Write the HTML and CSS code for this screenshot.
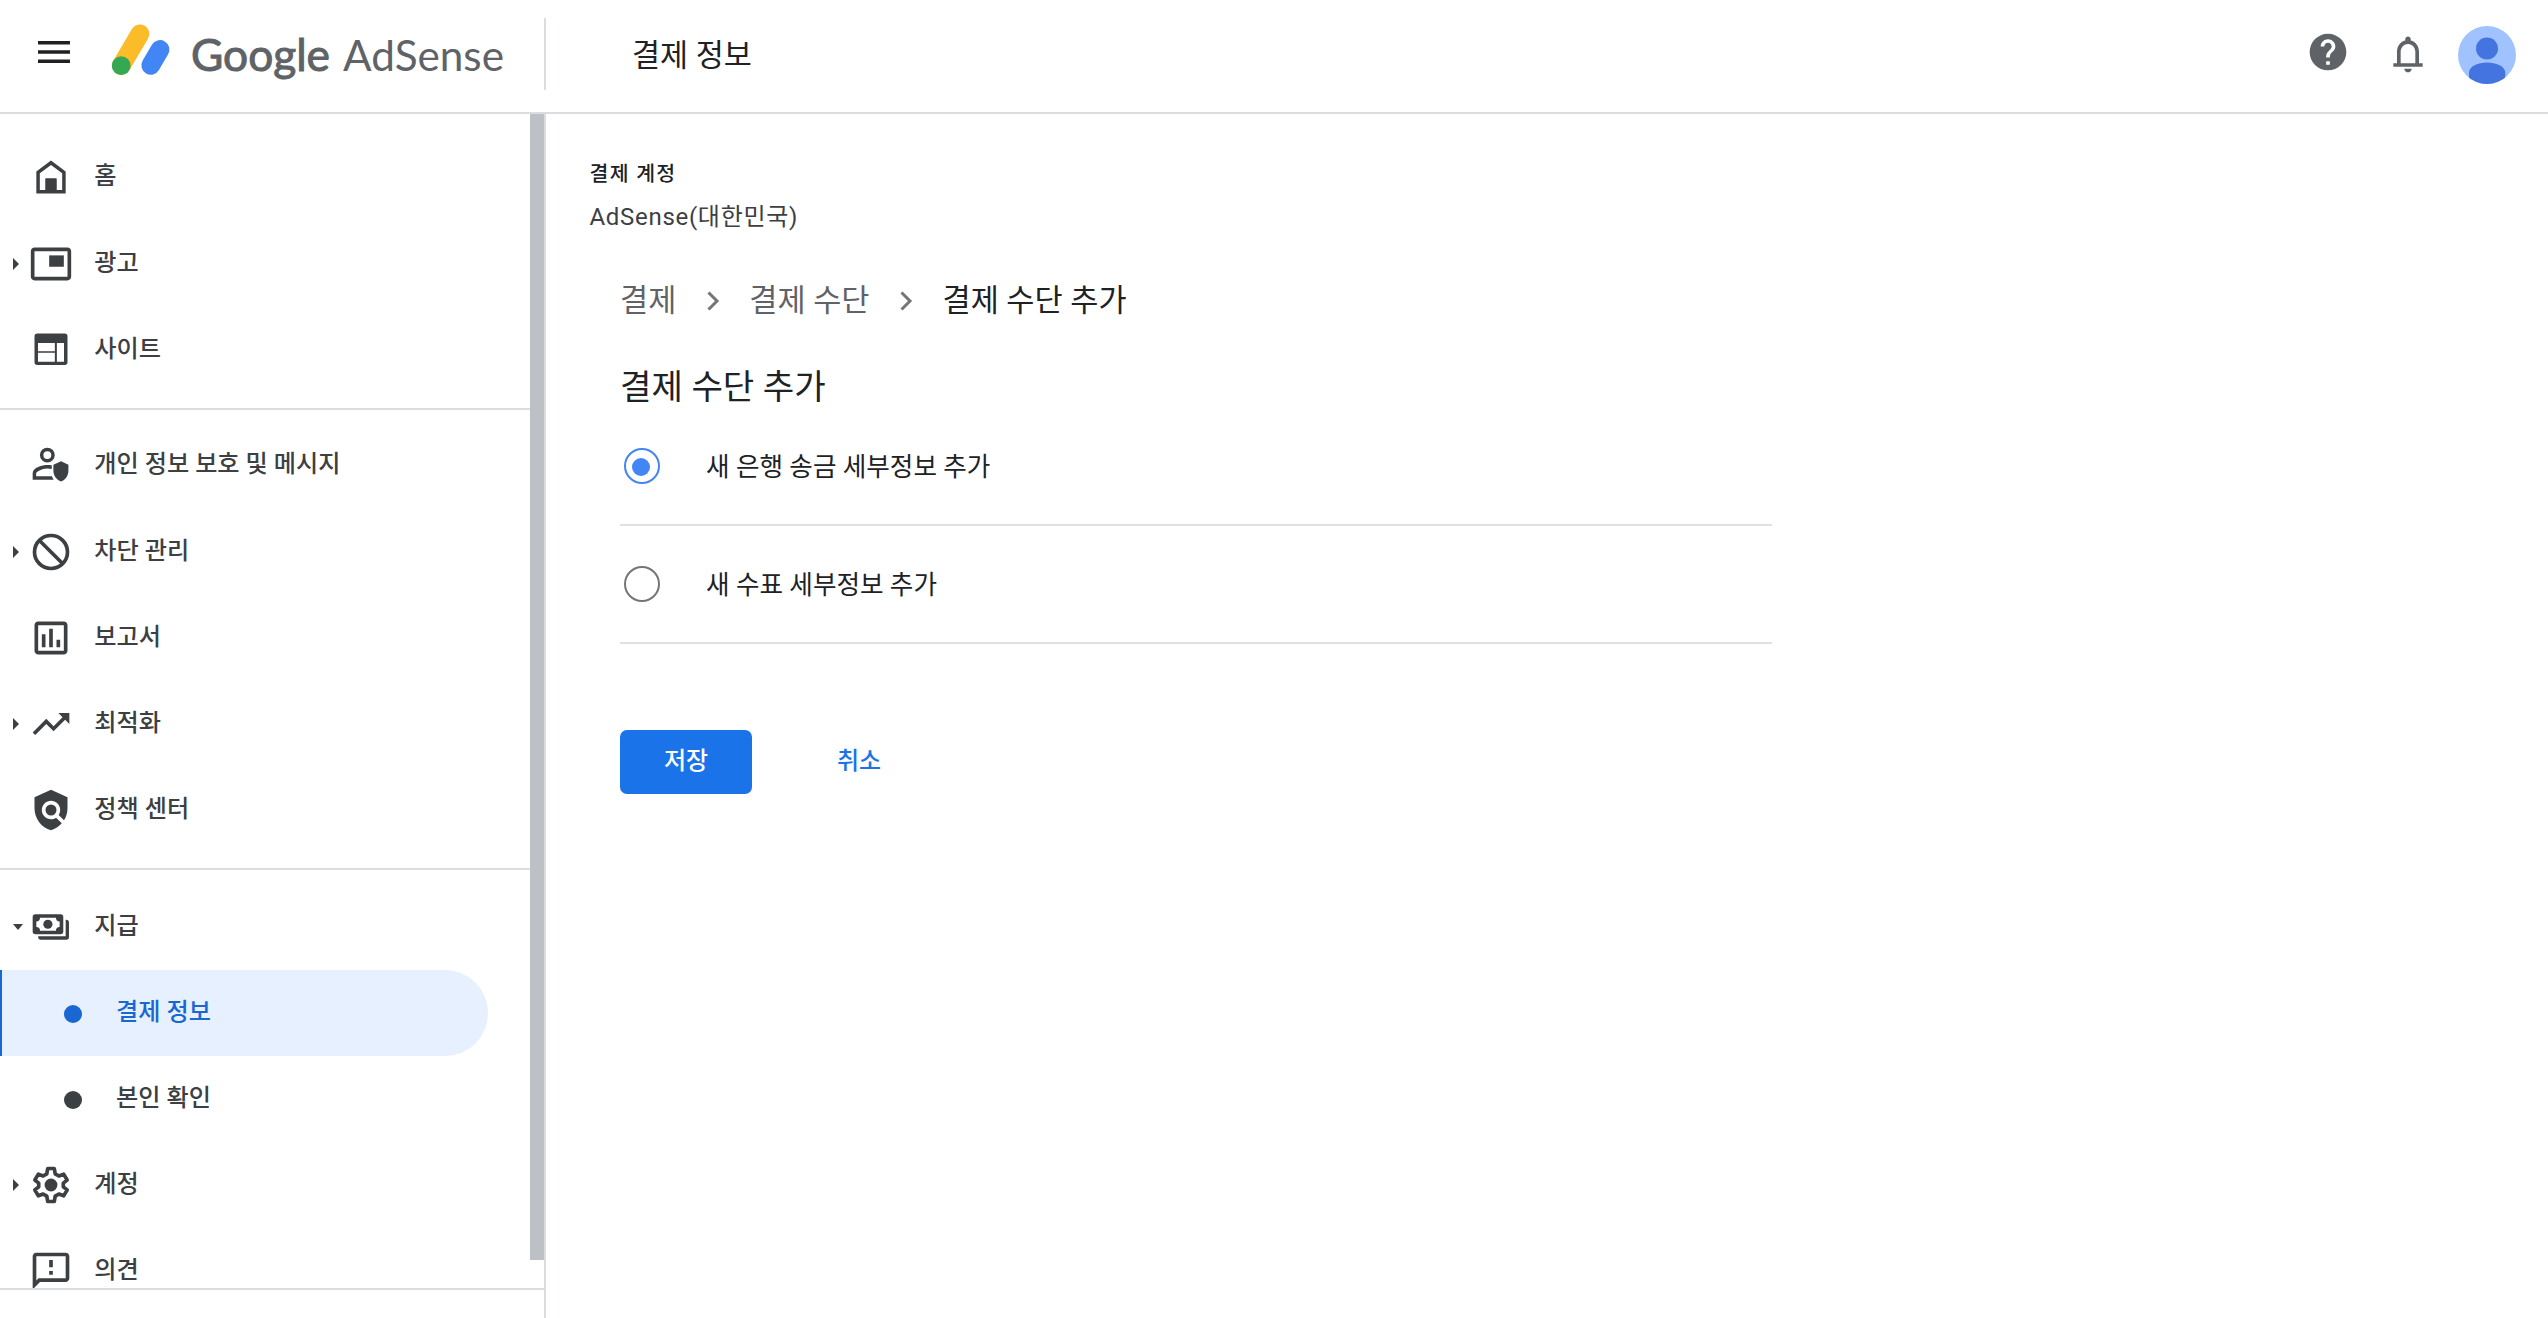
FILE: index.html
```html
<!DOCTYPE html>
<html lang="ko">
<head>
    <meta charset="UTF-8">
    <title>결제 정보 - Google AdSense</title>
    <link rel="stylesheet" href="styles.css">
</head>
<body>
    <header class="header">
        <div class="brand">
            <svg class="menu-btn" viewBox="0 0 32 22"><path d="M0 0h32v3.6H0zM0 9.2h32v3.6H0zM0 18.4h32V22H0z"/></svg>
            <svg class="logo" viewBox="0 0 58 51">
                <path d="M28 8.800L9.200 40.700" stroke="#fbbc2a" stroke-width="18.800" stroke-linecap="round"/>
                <path d="M48 24.500L38.800 40.300" stroke="#4285f4" stroke-width="18.800" stroke-linecap="round"/>
                <circle cx="9.200" cy="40.700" r="9.400" fill="#34a853"/>
            </svg>
            <svg class="wordmark" viewBox="0 0 320 60">
                <text class="google" x="0" y="46" textLength="139" lengthAdjust="spacingAndGlyphs">Google</text>
                <text class="adsense" x="152" y="46" textLength="161" lengthAdjust="spacingAndGlyphs">AdSense</text>
            </svg>
        </div>
        <h1>결제 정보</h1>
        <div class="tools">
            <svg class="help" viewBox="0 0 24 24"><path d="M12 2C6.48 2 2 6.48 2 12s4.48 10 10 10 10-4.48 10-10S17.52 2 12 2zm1 17h-2v-2h2v2zm2.07-7.75l-.9.92C13.45 12.9 13 13.5 13 15h-2v-.5c0-1.1.45-2.1 1.17-2.83l1.24-1.26c.37-.36.59-.86.59-1.41 0-1.1-.9-2-2-2s-2 .9-2 2H8c0-2.21 1.79-4 4-4s4 1.79 4 4c0 .88-.36 1.68-.93 2.25z"/></svg>
            <svg class="bell" viewBox="0 0 24 24"><path d="M12 22c1.1 0 2-.9 2-2h-4c0 1.1.9 2 2 2zm6-5v-6c0-3.07-1.63-5.64-4.5-6.32V4c0-.83-.67-1.5-1.5-1.5s-1.5.67-1.5 1.5v.68C7.64 5.36 6 7.92 6 11v6H4v2h16v-2h-2zm-2 0H8v-6c0-2.48 1.51-4.5 4-4.5s4 2.02 4 4.5v6z"/></svg>
            <svg class="avatar" viewBox="0 0 58 58">
                <clipPath id="round"><circle cx="29" cy="29" r="29"/></clipPath>
                <g clip-path="url(#round)">
                    <path fill="#a0c3ff" d="M0 0h58v58H0z"/>
                    <circle cx="29" cy="22.5" r="11" fill="#4374e0"/>
                    <path fill="#4374e0" d="M11 58V47c0-7 9-10.500 18-10.500S47.300 40 47.300 47v11z"/>
                </g>
            </svg>
        </div>
    </header>
    <div class="page">
        <aside class="sidebar">
            <nav class="nav">
                <ul>
                    <li class="tall">
                        <i></i>
                        <svg viewBox="0 0 24 24"><path d="M4 21V9l8-6 8 6v12H4zm1.900-1.900h3.100v-6.300h6v6.300h3.100V10L12 5.400 5.900 10z"/><path d="M9 12.800h6V20H9z"/></svg>
                        <span>홈</span>
                    </li>
                    <li>
                        <i class="closed"></i>
                        <svg viewBox="0 0 24 24"><path d="M19 7.300h-8v6.200H19V7.300z"/><path d="M21 3H3c-1.100 0-2 .900-2 2v14c0 1.100.900 1.980 2 1.980h18c1.100 0 2-.880 2-1.980V5c0-1.100-.900-2-2-2zm0 16.010H3V4.980h18v14.030z"/></svg>
                        <span>광고</span>
                    </li>
                    <li>
                        <i></i>
                        <svg viewBox="0 0 24 24"><path fill-rule="evenodd" d="M4.500 3h15A1.500 1.500 0 0 1 21 4.500v14.200a1.500 1.500 0 0 1-1.500 1.500h-15A1.500 1.500 0 0 1 3 18.700V4.500A1.500 1.500 0 0 1 4.500 3zM4.900 8.200v4.500h9.200V8.200zm0 5.300v4.900h9.200v-4.900zM15.200 8.200v10.200h3.900V8.200z"/></svg>
                        <span>사이트</span>
                    </li>
                </ul>
                <ul>
                    <li class="tall">
                        <i></i>
                        <svg viewBox="0 0 24 24"><circle cx="10" cy="6.600" r="3.100" fill="none" stroke="#3c4043" stroke-width="1.900"/><path d="M12.400 12.200c-.8-.15-1.600-.2-2.400-.2-2.700 0-8 1.300-8 4.500V20h11.500c-.5-.6-.8-1.200-1-1.900H3.900v-1.600c0-.7 3-2.600 6.100-2.600.8 0 1.600.1 2.400.3zM17.500 10l4 1.900v3.300c0 2.700-1.700 5.100-4 5.800-2.300-.7-4.200-3.100-4.200-5.800v-3.300z"/></svg>
                        <span>개인 정보 보호 및 메시지</span>
                    </li>
                    <li>
                        <i class="closed"></i>
                        <svg viewBox="0 0 24 24"><g fill="none" stroke="#3c4043" stroke-width="2"><circle cx="12" cy="12" r="9"/><path d="M5.700 5.700l12.600 12.600"/></g></svg>
                        <span>차단 관리</span>
                    </li>
                    <li>
                        <i></i>
                        <svg viewBox="0 0 24 24"><path d="M9 17H7v-7h2v7zm4 0h-2V7h2v10zm4 0h-2v-4h2v4zm2 2H5V5h14v14zm0-16H5c-1.100 0-2 .900-2 2v14c0 1.100.900 2 2 2h14c1.100 0 2-.900 2-2V5c0-1.100-.900-2-2-2z"/></svg>
                        <span>보고서</span>
                    </li>
                    <li>
                        <i class="closed"></i>
                        <svg viewBox="0 0 24 24"><path d="M16 6l2.290 2.290-4.880 4.880-4-4L2 16.590 3.410 18l6-6 4 4 6.300-6.290L22 12V6z"/></svg>
                        <span>최적화</span>
                    </li>
                    <li>
                        <i></i>
                        <svg viewBox="0 0 24 24"><path d="M21 5l-9-4-9 4v6c0 5.550 3.840 10.740 9 12 2.300-.560 4.330-1.900 5.880-3.710l-3.120-3.120c-1.940 1.290-4.580 1.070-6.290-.640-1.950-1.950-1.950-5.120 0-7.070 1.950-1.950 5.120-1.950 7.070 0 1.710 1.710 1.920 4.350.640 6.290l2.900 2.900C20.290 15.690 21 13.380 21 11V5z"/><circle cx="12" cy="12" r="3"/></svg>
                        <span>정책 센터</span>
                    </li>
                </ul>
                <ul>
                    <li>
                        <i class="open"></i>
                        <svg viewBox="0 0 24 24"><path fill-rule="evenodd" d="M3.500 5h13.700a1.500 1.500 0 0 1 1.500 1.500v8a1.500 1.500 0 0 1-1.500 1.500H3.500A1.500 1.500 0 0 1 2 14.500v-8A1.500 1.500 0 0 1 3.500 5zM6 7a2 2 0 0 1-2 2v3a2 2 0 0 1 2 2h8.700a2 2 0 0 1 2-2V9a2 2 0 0 1-2-2z"/><circle cx="10.300" cy="10.500" r="2.500"/><path d="M20 8h.300A1.500 1.500 0 0 1 21.800 9.500v7.900a1.500 1.500 0 0 1-1.500 1.500H6.500A1.500 1.500 0 0 1 5 17.400V17h15z"/></svg>
                        <span>지급</span>
                    </li>
                    <li class="sub active"><b></b><span>결제 정보</span></li>
                    <li class="sub"><b></b><span>본인 확인</span></li>
                    <li>
                        <i class="closed"></i>
                        <svg viewBox="0 0 24 24"><path fill="none" stroke="#3c4043" stroke-width="2" stroke-linejoin="round" d="M10.200 3h3.600l.5 2.900 2 1.200 2.600-1 1.900 3.200-2.100 1.700v2l2.100 1.700-1.900 3.200-2.600-1-2 1.200-.5 2.900h-3.600l-.5-2.900-2-1.200-2.600 1-1.900-3.200 2.100-1.700v-2L3.200 9.300l1.900-3.200 2.600 1 2-1.200z"/><circle cx="12" cy="12" r="3.500"/></svg>
                        <span>계정</span>
                    </li>
                    <li>
                        <i></i>
                        <svg viewBox="0 0 24 24"><path d="M20 2H4c-1.100 0-1.990.900-1.990 2L2 22l4-4h14c1.100 0 2-.900 2-2V4c0-1.100-.900-2-2-2zm0 14H5.170L4 17.170V4h16v12zM11 12h2v2h-2zm0-6h2v4h-2z"/></svg>
                        <span>의견</span>
                    </li>
                </ul>
                <div class="scrollbar"></div>
            </nav>
        </aside>
        <main class="main">
            <div class="account-label">결제 계정</div>
            <div class="account-name">AdSense(대한민국)</div>
            <div class="content">
                <div class="breadcrumb">
                    <a>결제</a>
                    <svg viewBox="0 0 12 20"><path d="M1.500 1.500L10 10l-8.500 8.500"/></svg>
                    <a>결제 수단</a>
                    <svg viewBox="0 0 12 20"><path d="M1.500 1.500L10 10l-8.500 8.500"/></svg>
                    <strong>결제 수단 추가</strong>
                </div>
                <h2>결제 수단 추가</h2>
                <div class="option first"><span class="radio checked"></span><label>새 은행 송금 세부정보 추가</label></div>
                <div class="option"><span class="radio"></span><label>새 수표 세부정보 추가</label></div>
                <div class="actions">
                    <button class="save">저장</button>
                    <button class="cancel">취소</button>
                </div>
            </div>
        </main>
    </div>
</body>
</html>
```
FILE: styles.css
```css
*{padding: 0;margin: 0;box-sizing: border-box;list-style: none;}
body{height: 1318px;overflow: hidden;background: #fff;color: #202124;font-family: Roboto,"Noto Sans CJK KR",sans-serif;}
svg{display: block;flex: none;overflow: visible;}

.header{display: flex;height: 114px;border-bottom: 2px solid #dadce0;}
.brand{display: flex;width: 546px;height: 72px;margin-top: 18px;padding-left: 38px;border-right: 2px solid #dadce0;}
.menu-btn{width: 32px;height: 22px;margin-top: 23px;fill: #202124;}
.logo{width: 58px;height: 51px;margin: 7px 0 0 42px;fill: none;}
.wordmark{width: 320px;height: 60px;margin: 7px 0 0 21px;fill: #5f6368;font-family: Lato,sans-serif;font-size: 42px;}
.google{font-size: 45px;font-weight: 400;stroke: #5f6368;stroke-width: 1px;}
.header h1{flex: 1;padding-left: 86px;font-size: 30.500px;font-weight: 400;line-height: 111px;}
.tools{display: flex;margin-right: 32px;fill: #5f6368;}
.help{width: 44px;height: 44px;margin: 30px 36px 0 0;}
.bell{width: 44px;height: 44px;margin: 32px 28px 0 0;}
.avatar{width: 58px;height: 58px;margin-top: 26px;}

.page{display: flex;height: 1204px;}
.sidebar{width: 546px;border-right: 2px solid #dadce0;}
.nav{position: relative;height: 1176px;overflow: hidden;border-bottom: 2px solid #dadce0;}
.scrollbar{position: absolute;top: 0;right: 0;width: 14px;height: 1146px;background: #bdc1c6;}
.nav ul{width: 530px;padding: 11px 0 15px;border-bottom: 2px solid #dadce0;}
.nav ul:first-child{padding-top: 19px;}
.nav ul:nth-child(3){padding-top: 14px;border: 0;}
.nav li{display: flex;align-items: center;height: 86px;color: #3c4043;font-size: 24.150px;font-weight: 500;}
.nav li.tall{height: 88px;}
.nav li svg{width: 44px;height: 44px;margin-right: 21px;fill: #3c4043;}
.nav li span{padding-bottom: 8px;}
.nav i{width: 16.500px;margin-left: 12.800px;}
.nav i:before{content: "";display: block;width: 0;}
.nav .closed:before{border: 6px solid transparent;border-left-color: #3c4043;border-right: 0;}
.nav .open:before{border: 5.500px solid transparent;border-top: 6px solid #3c4043;border-bottom: 0;}
.nav .sub{width: 488px;padding-left: 64px;}
.nav .sub b{width: 18px;height: 18px;margin: 1px 34px 0 0;border-radius: 50%;background: #3c4043;}
.nav .active{padding-left: 62px;border-left: 2px solid #1967d2;border-radius: 0 43px 43px 0;background: #e6f0ff;color: #1967d2;}
.nav .active b{background: #1967d2;}

.main{flex: 1;padding: 44px 0 0 43.500px;}
.account-label{height: 32px;font-size: 20.500px;font-weight: 500;line-height: 33px;letter-spacing: 1.300px;}
.account-name{height: 40px;margin-top: 7px;color: #3c4043;font-size: 24px;line-height: 41px;letter-spacing: .7px;}
.content{width: 1152px;margin-left: 30.500px;}
.breadcrumb{display: flex;align-items: center;height: 50px;margin-top: 38px;font-size: 30.600px;}
.breadcrumb a{padding-bottom: 4px;color: #5f6368;}
.breadcrumb strong{padding-bottom: 4px;font-weight: 400;}
.breadcrumb svg{width: 12px;height: 20px;margin: 2px 30.500px 0;fill: none;stroke: #757575;stroke-width: 3;}
.content h2{height: 50px;margin-top: 36px;font-size: 34.200px;font-weight: 400;line-height: 53px;}
.option{display: flex;align-items: center;height: 118px;padding-left: 4px;border-bottom: 2px solid #e0e0e0;font-size: 25.600px;}
.option.first{margin-top: -3px;}
.option label{padding-bottom: 4px;}
.radio{display: flex;width: 36px;height: 36px;margin-right: 46px;border: 2px solid #757575;border-radius: 50%;}
.radio.checked{border-color: #4285f4;}
.radio.checked:before{content: "";width: 18px;height: 18px;margin: 8px 0 0 6px;border-radius: 50%;background: #4285f4;}
.actions{display: flex;margin-top: 86px;}
.actions button{width: 132px;height: 64px;padding-bottom: 7px;border: 0;border-radius: 7px;background: none;color: #1a73e8;font: 500 24px Roboto,"Noto Sans CJK KR",sans-serif;}
.actions .save{background: #1a73e8;color: #fff;}
.actions .cancel{margin-left: 41px;}
```
